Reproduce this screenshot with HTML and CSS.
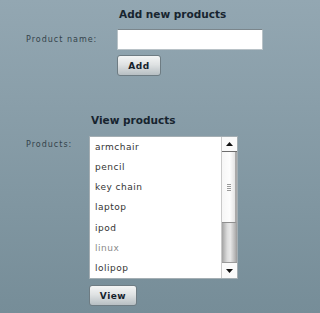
FILE: index.html
```html
<!DOCTYPE html>
<html lang="en">
<head>
    <meta charset="UTF-8">
    <meta name="viewport" content="width=device-width, initial-scale=1.0">
    <title>Products</title>
    <link rel="stylesheet" href="styles.css">
</head>
<body>

    <!-- Add product form -->
    <div class="section add-section">
        <h2 class="field-col">Add new products</h2>

        <label for="product-name">Product name:</label>
        <input type="text" id="product-name" class="text-field">

        <button class="btn field-col">Add</button>
    </div>

    <!-- Product list -->
    <div class="section view-section">
        <h2 class="field-col">View products</h2>

        <label class="top-label">Products:</label>
        <div class="listbox">
            <ul class="items">
                <li>armchair</li>
                <li>pencil</li>
                <li>key chain</li>
                <li>laptop</li>
                <li>ipod</li>
                <li class="muted">linux</li>
                <li>lolipop</li>
            </ul>
            <div class="scrollbar">
                <div class="scroll-btn">
                    <svg width="7" height="4" viewBox="0 0 7 4"><polygon points="0,4 7,4 3.5,0" fill="#111"/></svg>
                </div>
                <div class="thumb"><span class="grip"></span></div>
                <div class="track"></div>
                <div class="scroll-btn down">
                    <svg width="7" height="4" viewBox="0 0 7 4"><polygon points="0,0 7,0 3.5,4" fill="#111"/></svg>
                </div>
            </div>
        </div>

        <button class="btn view-btn field-col">View</button>
    </div>

</body>
</html>
```

FILE: styles.css
```css
html, body {
    height: 100%;
}
body {
    margin: 0;
    padding-top: 8px;
    box-sizing: border-box;
    font-family: "DejaVu Sans", Verdana, sans-serif;
    font-size: 9px;
    background: linear-gradient(to bottom, #93a7b2, #768d98);
    color: #1b2833;
}
.section {
    display: grid;
    padding-left: 26px;
    align-items: center;
}
.field-col {
    grid-column: 2;
    justify-self: start;
}
.add-section {
    grid-template-columns: 91px 146px;
}
.add-section .text-field {
    margin-top: 8px;
}
.add-section .btn {
    margin-top: 5px;
}
.view-section {
    grid-template-columns: 63px 149px;
    margin-top: 38px;
}
.view-section .listbox {
    margin-top: 9px;
}
h2 {
    margin: 0;
    padding-left: 2px;
    font-size: 10.5px;
    line-height: 13px;
    font-weight: bold;
    color: #17242f;
}
label {
    font-size: 8px;
    line-height: 10px;
    letter-spacing: 1px;
    color: #34434b;
}
.add-section label {
    margin-top: 8px;
}
.top-label {
    align-self: start;
    margin-top: 13px;
}
.text-field {
    width: 146px;
    height: 21px;
    box-sizing: border-box;
    margin: 0;
    border: 1px solid #b8c2c7;
    border-top-color: #7b868c;
    background: #fff;
}
.btn {
    height: 21px;
    width: 44px;
    padding: 0;
    border: 1px solid #6e7c83;
    border-radius: 3px;
    background: linear-gradient(to bottom, #f4f5f5, #dfe2e3 45%, #b7bfc3);
    font-family: inherit;
    font-size: 9px;
    font-weight: bold;
    color: #15212b;
    letter-spacing: 0.5px;
}
.view-btn {
    width: 48px;
    margin-top: 6px;
}
.listbox {
    display: flex;
    height: 143px;
    box-sizing: border-box;
    border: 1px solid #a4aeb3;
    background: #fff;
}
.items {
    flex: 1;
    list-style: none;
    margin: 0;
    padding: 0 0 0 5px;
}
.items li {
    height: 20.15px;
    line-height: 20px;
    font-size: 9px;
    letter-spacing: 0.5px;
    color: #333;
}
.items li.muted {
    color: #8a8a8a;
}
.scrollbar {
    width: 15px;
    display: flex;
    flex-direction: column;
    border-left: 1px solid #c9c9c9;
}
.scroll-btn {
    height: 14px;
    display: flex;
    align-items: center;
    justify-content: center;
    background: #fafafa;
    border-bottom: 1px solid #6d6d6d;
}
.scroll-btn.down {
    height: 15px;
    border-bottom: none;
    border-top: 1px solid #9a9a9a;
}
.thumb {
    height: 70px;
    display: flex;
    align-items: center;
    justify-content: center;
    background: linear-gradient(to right, #f6f6f6, #fdfdfd 60%, #e4e4e4);
    border-right: 2px solid #a9a9a9;
    border-bottom: 1px solid #8e8e8e;
}
.grip {
    width: 4px;
    height: 7px;
    background: repeating-linear-gradient(to bottom, #9a9a9a 0, #9a9a9a 1px, transparent 1px, transparent 2px);
}
.track {
    flex: 1;
    background: linear-gradient(to right, #a3a3a3, #dcdcdc 35%, #e8e8e8 55%, #b9b9b9 85%, #9c9c9c);
}
```
